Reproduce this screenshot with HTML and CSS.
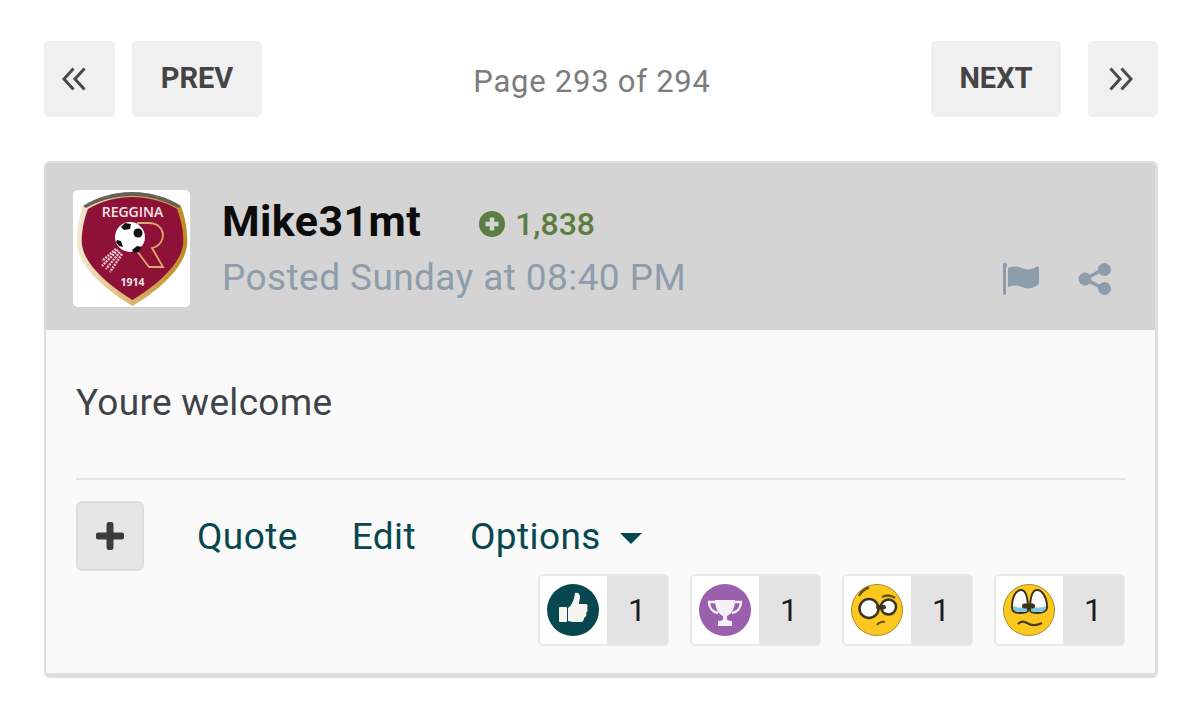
FILE: index.html
```html
<!DOCTYPE html>
<html lang="en">
<head>
    <meta charset="UTF-8">
    <meta name="viewport" content="width=device-width, initial-scale=1.0">
    <title>Page 293 of 294</title>
    <link rel="stylesheet" href="styles.css">
</head>
<body>
    <!-- Pagination -->
    <div class="pager">
        <div class="pager-group">
            <a class="pager-btn pager-icon pager-first">
                <svg width="24" height="24" viewBox="0 0 24 24" fill="none" stroke="#4a4a4a" stroke-width="3"><path d="M11.500 1.500 2 12l9.500 10.500M22.500 1.500 13 12l9.500 10.500"/></svg>
            </a>
            <a class="pager-btn pager-text">PREV</a>
        </div>
        <div class="pager-label">Page 293 of 294</div>
        <div class="pager-group pager-right">
            <a class="pager-btn pager-text">NEXT</a>
            <a class="pager-btn pager-icon pager-last">
                <svg width="24" height="24" viewBox="0 0 24 24" fill="none" stroke="#4a4a4a" stroke-width="3"><path d="M1.500 1.500 11 12 1.500 22.500M12.500 1.500 22 12l-9.500 10.500"/></svg>
            </a>
        </div>
    </div>

    <!-- Post -->
    <div class="post">
        <div class="post-head">
            <div class="avatar">
                <svg width="117" height="117" viewBox="0 0 117 117">
                    <defs>
                        <linearGradient id="rim" x1="0" y1="0" x2="1" y2="0">
                            <stop offset="0" stop-color="#f3ead2"/>
                            <stop offset=".45" stop-color="#dcb873"/>
                            <stop offset="1" stop-color="#bf8a22"/>
                        </linearGradient>
                    </defs>
                    <path d="M59 2C42 2 24 7 10 16 5 30 3 45 4 56c3 22 29 44 55.500 60C86 100 111 78 114 56c1-11-1-26-6-40C94 7 76 2 59 2z" fill="url(#rim)"/>
                    <path d="M59 2C42 2 24 7 10 16l3 2C27 10 43 6 59 6s32 4 46 12l3-2C94 7 76 2 59 2z" fill="#66625a"/>
                    <path d="M59 7C44 7 28 11 15 19 10 32 8 45 9 55c3 20 26 40 50.500 55C84 95 107 75 110 55c1-10-1-23-6-36C91 11 74 7 59 7z" fill="#8e1238"/>
                    <text x="59.500" y="27" class="crest-name" text-anchor="middle">REGGINA</text>
                    <path d="M64 33h12c17 0 19 21 3 25l11 19H76L61 57" fill="none" stroke="#d9a86a" stroke-width="1.800"/>
                    <path d="M45 60 29 76M47 62 33 79M49 64 37 82M43 59 29 71" stroke="#e9c3d0" stroke-width="2.500" stroke-dasharray="2 1"/>
                    <circle cx="57" cy="47" r="15" fill="#fff"/>
                    <circle cx="65" cy="43" r="4.500" fill="#111"/>
                    <path d="M52 33l6 1-1 5-6 1-3-3zM44 50l4 1 2 6-4-1-3-4zM59 60l5-4 5 1-3 5-5 1z" fill="#111"/>
                    <text x="59.500" y="96" class="crest-year" text-anchor="middle">1914</text>
                </svg>
            </div>
            <div class="author">
                <div class="author-line">
                    <span class="author-name">Mike31mt</span>
                    <span class="rep">
                        <svg width="26" height="26" viewBox="0 0 26 26"><circle cx="13" cy="13" r="13" fill="#5d7c42"/><path d="M13 6.500v13M6.500 13h13" stroke="#d4d4d4" stroke-width="4.500"/></svg>
                        1,838
                    </span>
                </div>
                <div class="author-date">Posted Sunday at 08:40 PM</div>
            </div>
            <div class="head-tools">
                <svg width="38" height="32" viewBox="0 0 38 32" fill="#8d9dab">
                    <rect x="0" y="2" width="3" height="30" rx="1.500"/>
                    <circle cx="1.500" cy="2.500" r="2.500"/>
                    <path d="M5 5c5-2 9-2 14 0s9 2 14-1c2-1 3 0 3 1v15c0 1-1 2-3 3-5 3-9 3-14 1s-9-2-14 0z"/>
                </svg>
                <svg width="34" height="32" viewBox="0 0 34 32" fill="#8d9dab" stroke="#8d9dab">
                    <path d="M7 16 26 6M7 16l19 10" stroke-width="3.500" fill="none"/>
                    <circle cx="7" cy="16" r="6.500" stroke="none"/>
                    <circle cx="26.500" cy="6.500" r="6.500" stroke="none"/>
                    <circle cx="26.500" cy="25.500" r="6.500" stroke="none"/>
                </svg>
            </div>
        </div>
        <div class="post-body">
            <p class="post-text">Youre welcome</p>
            <div class="post-controls">
                <a class="multi-btn">
                    <svg width="28" height="28" viewBox="0 0 28 28"><path d="M14 3v22M3 14h22" stroke="#3c3c3c" stroke-width="7" stroke-linecap="round"/></svg>
                </a>
                <a class="control control-link">Quote</a>
                <a class="control control-link">Edit</a>
                <a class="control">Options<span class="caret"></span></a>
            </div>
            <div class="reactions">
                <div class="reaction">
                    <div class="reaction-icon">
                        <svg width="52" height="52" viewBox="0 0 52 52">
                            <circle cx="26" cy="26" r="26" fill="#07474f"/>
                            <rect x="12" y="23" width="8" height="15" rx="1" fill="#f6f5f0"/>
                            <path d="M21 24c4-3 6-8 7-15 3-1 5 1 5 4 0 2-1 4-1 7h7c2 0 2 3 1 4 1 2 1 3-1 5 1 2 0 4-2 5 0 2-1 4-3 4H26c-2 0-3-1-5-1z" fill="#f6f5f0"/>
                        </svg>
                    </div>
                    <div class="reaction-count">1</div>
                </div>
                <div class="reaction">
                    <div class="reaction-icon">
                        <svg width="52" height="52" viewBox="0 0 52 52">
                            <circle cx="26" cy="26" r="26" fill="#9a5fad"/>
                            <path d="M16 16h20c0 8-3 14-8 16v3c0 1 2 2 5 2v5H19v-5c3 0 5-1 5-2v-3c-5-2-8-8-8-16z" fill="#f5eff7"/>
                            <path d="M17 18h-7c0 6 4 10 9 11M35 18h7c0 6-4 10-9 11" fill="none" stroke="#f5eff7" stroke-width="2.500"/>
                        </svg>
                    </div>
                    <div class="reaction-count">1</div>
                </div>
                <div class="reaction">
                    <div class="reaction-icon">
                        <svg width="52" height="52" viewBox="0 0 52 52">
                            <circle cx="26" cy="26" r="25.500" fill="#fcc81f" stroke="#a98a2a"/>
                            <circle cx="18" cy="24.500" r="9.500" fill="#fff" stroke="#3a3320" stroke-width="2.500"/>
                            <circle cx="37.500" cy="23" r="7.500" fill="#fff" stroke="#3a3320" stroke-width="2.500"/>
                            <rect x="25" y="21" width="10" height="4.500" rx="2.200" fill="#3a3320"/>
                            <path d="M8 12c2-4 5-7 10-8.500M31 13c4-2 9-2 13 1" fill="none" stroke="#6b5312" stroke-width="2.500"/>
                            <path d="M26 41c2-3 5-3.500 8-3" fill="none" stroke="#6b5312" stroke-width="2"/>
                        </svg>
                    </div>
                    <div class="reaction-count">1</div>
                </div>
                <div class="reaction">
                    <div class="reaction-icon">
                        <svg width="52" height="52" viewBox="0 0 52 52">
                            <circle cx="26" cy="26" r="25.500" fill="#fcc81f" stroke="#a98a2a"/>
                            <path d="M25 26c0 2-3 3-8 3s-8-2-8-6C9 13 13 6 18 6c5 0 7 9 7 20zM27 26c0 2 3 3 8 3s9-2 9-6c0-10-5-17-10-17-5 0-7 9-7 20z" fill="#fff" stroke="#3a3320" stroke-width="2"/>
                            <path d="M10 22c5 2 10 2 14 0v4c0 2-2 2-7 2s-7-1-7-6zM43 22c-5 2-11 2-15 0v4c0 2 2 2 7 2s8-1 8-6z" fill="#7ec8e3"/>
                            <rect x="19" y="19.500" width="13" height="5" rx="2.500" fill="#3a3320"/>
                            <path d="M15 40c4-4 7-2 11 0s9 1 13-1" fill="none" stroke="#4a3b12" stroke-width="2.200"/>
                        </svg>
                    </div>
                    <div class="reaction-count">1</div>
                </div>
            </div>
        </div>
    </div>
</body>
</html>
```

FILE: styles.css
```css
body {
    margin: 0;
    padding: 41px 42px 0 44px;
    background-color: #fff;
    font-family: Roboto, "Liberation Sans", sans-serif;
    color: #3d4145;
}

.pager {
    display: flex;
    align-items: center;
    justify-content: space-between;
    height: 76px;
}

.pager-group {
    display: flex;
    gap: 17px;
    width: 218px;
}

.pager-right {
    gap: 27px;
    width: 227px;
}

.pager-btn {
    display: flex;
    align-items: center;
    justify-content: center;
    height: 76px;
    background: #f0f0f0;
    border-radius: 5px;
    color: #444;
    font-weight: 700;
    font-size: 29px;
}

.pager-icon {
    width: 71px;
    box-sizing: border-box;
}

.pager-first {
    padding-right: 12px;
}

.pager-last {
    width: 70px;
    padding-right: 4px;
}

.pager-text {
    width: 130px;
    box-sizing: border-box;
    padding-bottom: 2px;
}

.pager-label {
    font-size: 31px;
    letter-spacing: .75px;
    color: #7c7c7c;
    margin: 4px 9px 0 0;
}

.post {
    margin-top: 44px;
    height: 517px;
    box-sizing: border-box;
    border: 2px solid #dedede;
    border-bottom-width: 5px;
    border-right-width: 3px;
    border-radius: 6px;
    background: #fafafa;
    overflow: hidden;
}

.post-head {
    display: flex;
    height: 167px;
    box-sizing: border-box;
    padding: 27px 43px 0 27px;
    background: #d4d4d4;
}

.avatar {
    width: 117px;
    height: 117px;
    background: #fff;
    border-radius: 5px;
    flex-shrink: 0;
}

.crest-name {
    font: 600 14px "Open Sans", sans-serif;
    fill: #f5e6e6;
}

.crest-year {
    font: 700 10.500px "Open Sans", sans-serif;
    fill: #f5e6e6;
}

.author {
    margin-left: 32px;
    flex: 1;
}

.author-line {
    display: flex;
    align-items: center;
    gap: 58px;
    height: 60px;
    margin-top: 1px;
}

.author-name {
    font-size: 43px;
    font-weight: 700;
    letter-spacing: .4px;
    color: #0c0c0c;
}

.rep {
    display: flex;
    align-items: center;
    gap: 10px;
    font-size: 32px;
    font-weight: 500;
    color: #5d7c42;
    margin-top: 5px;
}

.author-date {
    margin-top: 5px;
    font-size: 37px;
    letter-spacing: .42px;
    line-height: 44px;
    color: #8d9dab;
}

.head-tools {
    display: flex;
    align-items: flex-end;
    gap: 37px;
    padding-bottom: 35px;
}

.post-body {
    padding: 0 30px;
}

.post-text {
    margin: 0;
    padding: 52px 0 54px;
    font-size: 37px;
    letter-spacing: .3px;
    line-height: 42px;
    color: #3f4347;
    border-bottom: 2px solid #e4e4e4;
}

.post-controls {
    display: flex;
    align-items: center;
    margin-top: 21px;
}

.multi-btn {
    display: flex;
    align-items: center;
    justify-content: center;
    width: 68px;
    height: 70px;
    box-sizing: border-box;
    background: #e6e6e6;
    border: 2px solid #dedede;
    border-radius: 6px;
    margin-right: 53px;
}

.control {
    font-size: 37px;
    letter-spacing: .4px;
    color: #07474f;
}

.control-link {
    margin-right: 54px;
}

.caret {
    display: inline-block;
    margin-left: 19px;
    vertical-align: middle;
    border-left: 11px solid transparent;
    border-right: 11px solid transparent;
    border-top: 11px solid #07474f;
}

.reactions {
    display: flex;
    justify-content: flex-end;
    gap: 21px;
    margin-top: 3px;
}

.reaction {
    display: flex;
    width: 131px;
    height: 72px;
    box-sizing: border-box;
    border: 2px solid #e8e8e8;
    border-radius: 5px;
    background: #fff;
}

.reaction-icon {
    display: flex;
    align-items: center;
    justify-content: center;
    width: 67px;
    flex-shrink: 0;
    padding-right: 1px;
    box-sizing: border-box;
}

.reaction-count {
    flex: 1;
    display: flex;
    align-items: center;
    justify-content: center;
    background: #e3e3e3;
    font-size: 32px;
    color: #1c1c1c;
}
```
